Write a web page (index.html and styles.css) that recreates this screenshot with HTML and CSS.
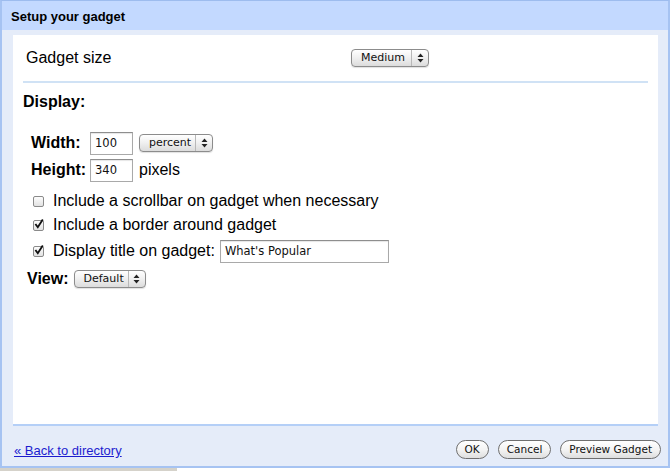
FILE: index.html
```html
<!DOCTYPE html>
<html>
<head>
  <title>Setup your gadget</title>
  <link rel="stylesheet" href="styles.css">
</head>
<body>
  <div class="dialog">
    <div class="dialog-title">Setup your gadget</div>
    <div class="dialog-body">
      <div class="panel">
        <div class="size-row">
          <span class="size-label">Gadget size</span>
          <span class="select select-medium">
            <span class="select-text">Medium</span>
            <span class="select-arrows">
              <svg width="7" height="10" viewBox="0 0 7 10"><path d="M3.5 0.5 L6.5 4 L0.5 4 Z M3.5 9.5 L6.5 6 L0.5 6 Z" fill="#222"/></svg>
            </span>
          </span>
        </div>
        <div class="rule"></div>

        <div class="section-title">Display:</div>

        <div class="field-row first">
          <span class="field-label">Width:</span>
          <span class="text-input small">100</span>
          <span class="select select-unit">
            <span class="select-text">percent</span>
            <span class="select-arrows">
              <svg width="7" height="10" viewBox="0 0 7 10"><path d="M3.5 0.5 L6.5 4 L0.5 4 Z M3.5 9.5 L6.5 6 L0.5 6 Z" fill="#222"/></svg>
            </span>
          </span>
        </div>
        <div class="field-row">
          <span class="field-label">Height:</span>
          <span class="text-input small">340</span>
          <span class="unit">pixels</span>
        </div>

        <div class="check-row first">
          <span class="checkbox"></span>
          <span>Include a scrollbar on gadget when necessary</span>
        </div>
        <div class="check-row">
          <span class="checkbox checked">
            <svg width="12" height="12" viewBox="0 0 12 12"><path d="M2.4 6 L4.8 9.2 L9.8 1.6" fill="none" stroke="#111" stroke-width="1.9"/></svg>
          </span>
          <span>Include a border around gadget</span>
        </div>
        <div class="check-row title-row">
          <span class="checkbox checked">
            <svg width="12" height="12" viewBox="0 0 12 12"><path d="M2.4 6 L4.8 9.2 L9.8 1.6" fill="none" stroke="#111" stroke-width="1.9"/></svg>
          </span>
          <span>Display title on gadget:</span>
          <span class="text-input wide">What's Popular</span>
        </div>

        <div class="view-row">
          <span class="view-label">View:</span>
          <span class="select select-view">
            <span class="select-text">Default</span>
            <span class="select-arrows">
              <svg width="7" height="10" viewBox="0 0 7 10"><path d="M3.5 0.5 L6.5 4 L0.5 4 Z M3.5 9.5 L6.5 6 L0.5 6 Z" fill="#222"/></svg>
            </span>
          </span>
        </div>
      </div>

      <div class="dialog-footer">
        <a href="#" class="back-link">&laquo; Back to directory</a>
        <div class="buttons">
          <span class="button">OK</span>
          <span class="button">Cancel</span>
          <span class="button">Preview Gadget</span>
        </div>
      </div>
    </div>
  </div>
  <div class="page-below"></div>
</body>
</html>
```

FILE: styles.css
```css
body {
  margin: 0;
  font-family: "Liberation Sans", Arial, sans-serif;
  background-color: #fff;
  color: #000;
  overflow: hidden;
}

.dialog {
  width: 666px;
  border: 2px solid #a6c3f2;
  border-top: 1px solid #9dbcee;
  background-color: #e5ecf9;
}

.dialog-title {
  height: 29px;
  line-height: 31px;
  padding-left: 9px;
  background-color: #c3d9ff;
  font-size: 13px;
  font-weight: bold;
}

.dialog-body {
  padding: 5px 10px 0 11px;
}

.panel {
  height: 391px;
  box-sizing: border-box;
  padding: 0 10px;
  background-color: #fff;
  border-bottom: 2px solid #b4cff7;
  font-size: 16px;
}

.size-row {
  display: flex;
  align-items: center;
  height: 46px;
  padding-left: 3px;
}

.size-label {
  width: 325px;
}

.rule {
  height: 2px;
  background-color: #d0e2f5;
}

.section-title {
  margin-top: 9px;
  line-height: 20px;
  font-weight: bold;
}

/* fake mac style selects */
.select {
  display: inline-flex;
  align-items: stretch;
  height: 18px;
  box-sizing: border-box;
  border: 1px solid #8c8c8c;
  border-radius: 4px;
  background: linear-gradient(#ffffff, #f1f1f1 45%, #dcdcdc);
  box-shadow: 0 1px 1px rgba(0, 0, 0, 0.12);
  font-family: "DejaVu Sans", sans-serif;
  font-size: 11px;
  color: #111;
}

.select-text {
  flex: 1;
  line-height: 16px;
  padding-left: 9px;
}

.select-arrows {
  width: 16px;
  border-left: 1px solid #b8b8b8;
  display: flex;
  align-items: center;
  justify-content: center;
}

.select-medium {
  width: 78px;
}

.select-unit {
  width: 74px;
  margin-left: 6px;
}

.select-view {
  width: 72px;
  margin-left: 5px;
}

.text-input {
  display: inline-block;
  box-sizing: border-box;
  height: 23px;
  line-height: 21px;
  padding-left: 4px;
  border: 1px solid #a9a9a9;
  border-top-color: #8e8e8e;
  box-shadow: inset 0 1px 1px rgba(0, 0, 0, 0.1);
  font-family: "DejaVu Sans", sans-serif;
  font-size: 11.5px;
  color: #111;
}

.text-input.small {
  width: 43px;
}

.text-input.wide {
  width: 169px;
  margin-left: 5px;
}

.field-row {
  display: flex;
  align-items: center;
  height: 24px;
  margin-top: 3px;
  padding-left: 8px;
}

.field-row.first {
  margin-top: 19px;
}

.field-label {
  width: 59px;
  font-weight: bold;
}

.unit {
  margin-left: 6px;
}

.check-row {
  display: flex;
  align-items: center;
  height: 24px;
  padding-left: 10px;
}

.check-row.first {
  margin-top: 7px;
}

.check-row.title-row {
  margin-top: 2px;
}

.checkbox {
  width: 11px;
  height: 11px;
  box-sizing: border-box;
  margin-right: 9px;
  border: 1px solid #8a8a8a;
  border-radius: 2px;
  background: linear-gradient(#fdfdfd, #e2e2e2);
  position: relative;
}

.checkbox svg {
  position: absolute;
  left: -1px;
  top: -3px;
}

.view-row {
  display: flex;
  align-items: center;
  height: 24px;
  margin-top: 4px;
  padding-left: 4px;
}

.view-label {
  font-weight: bold;
}

.dialog-footer {
  display: flex;
  justify-content: space-between;
  align-items: center;
  height: 40px;
  padding: 0 0 0 1px;
}

.back-link {
  font-size: 13px;
  color: #1c1ccf;
  margin-top: 9px;
}

.buttons {
  display: flex;
  gap: 9px;
  margin-right: -3px;
  margin-top: 7px;
}

.button {
  display: inline-block;
  height: 19px;
  box-sizing: border-box;
  line-height: 17px;
  padding: 0 8px;
  border: 1px solid #6f6f6f;
  border-radius: 10px;
  background: linear-gradient(#ffffff, #f4f4f4 50%, #dedede);
  font-family: "DejaVu Sans", sans-serif;
  font-size: 10.5px;
  color: #111;
}

.page-below {
  width: 177px;
  height: 20px;
  background-color: #d5d2ca;
}
```
